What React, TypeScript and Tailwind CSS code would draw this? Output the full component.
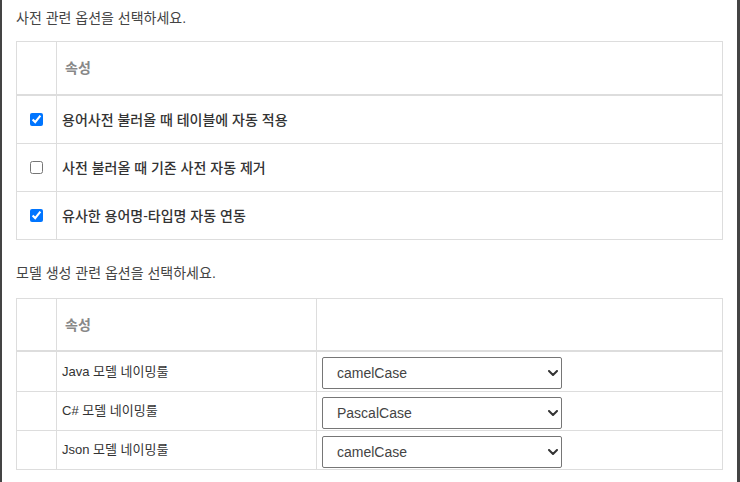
import { ChangeEvent, useState } from "react";

const FONT = "font-['Liberation_Sans','Noto_Sans_CJK_KR',sans-serif]";

type DictOption = { id: string; label: string; checked: boolean };
type NamingOption = { id: string; label: string; value: string };

const CASES = ["camelCase", "PascalCase", "snake_case", "kebab-case"];

function Chevron() {
  return (
    <svg
      className="pointer-events-none absolute right-[4px] top-1/2 -translate-y-1/2"
      width="10"
      height="6"
      viewBox="0 0 10 6"
      fill="none"
    >
      <path d="M1 1l4 4 4-4" stroke="#333" strokeWidth="2" strokeLinecap="round" strokeLinejoin="round" />
    </svg>
  );
}

function CaseSelect({ value, onChange }: { value: string; onChange: (v: string) => void }) {
  return (
    <div className="relative w-[240px]">
      <select
        value={value}
        onChange={(e: ChangeEvent<HTMLSelectElement>) => onChange(e.target.value)}
        className="block h-[32px] w-full appearance-none rounded-[2px] border border-[#767676] bg-white pl-[14px] text-[14px] text-[#444] outline-none"
      >
        {CASES.map((c) => (
          <option key={c} value={c}>
            {c}
          </option>
        ))}
      </select>
      <Chevron />
    </div>
  );
}

// row heights inside the bordered tables; last row sits on the outer border
const dictRowH = ["h-[48px] border-b border-[#ddd]", "h-[48px] border-b border-[#ddd]", "h-[47px]"];
const namingRowH = ["h-[40px] border-b border-[#ddd]", "h-[39px] border-b border-[#ddd]", "h-[38px]"];

export default function App() {
  const [dict, setDict] = useState<DictOption[]>([
    { id: "apply", label: "용어사전 불러올 때 테이블에 자동 적용", checked: true },
    { id: "remove", label: "사전 불러올 때 기존 사전 자동 제거", checked: false },
    { id: "link", label: "유사한 용어명-타입명 자동 연동", checked: true },
  ]);
  const [naming, setNaming] = useState<NamingOption[]>([
    { id: "java", label: "Java 모델 네이밍룰", value: "camelCase" },
    { id: "cs", label: "C# 모델 네이밍룰", value: "PascalCase" },
    { id: "json", label: "Json 모델 네이밍룰", value: "camelCase" },
  ]);

  function toggle(id: string) {
    setDict((d) => d.map((o) => (o.id === id ? { ...o, checked: !o.checked } : o)));
  }

  function setCase(id: string, value: string) {
    setNaming((n) => n.map((o) => (o.id === id ? { ...o, value } : o)));
  }

  return (
    <div
      className={`${FONT} h-[482px] w-[740px] overflow-hidden border-l-2 border-r-[3px] border-[#444] bg-white px-[14px] pt-[8px] text-[14px] leading-[20px]`}
    >
      <p className="h-[20px] text-[#444]">사전 관련 옵션을 선택하세요.</p>

      {/* 사전 옵션 */}
      <div className="mt-[13px] border border-[#ddd]">
        <div className="flex h-[54px] border-b-2 border-[#ddd]">
          <div className="w-[40px] border-r border-[#ddd]" />
          <div className="flex flex-1 items-center pl-[8px] font-bold text-[#888]">속성</div>
        </div>
        {dict.map((o, i) => (
          <div key={o.id} className={`flex ${dictRowH[i]}`}>
            <div className="flex w-[40px] items-center justify-center border-r border-[#ddd]">
              <input
                type="checkbox"
                checked={o.checked}
                onChange={() => toggle(o.id)}
                className="m-0 h-[13px] w-[13px]"
              />
            </div>
            <div className="flex flex-1 items-center pl-[5px] font-medium text-[#333]">{o.label}</div>
          </div>
        ))}
      </div>

      <p className="mt-[23px] h-[20px] text-[#444]">모델 생성 관련 옵션을 선택하세요.</p>

      {/* 모델 옵션 */}
      <div className="mt-[15px] border border-[#ddd]">
        <div className="flex h-[53px] border-b-2 border-[#ddd]">
          <div className="w-[40px] border-r border-[#ddd]" />
          <div className="flex w-[260px] items-center border-r border-[#ddd] pl-[8px] font-bold text-[#888]">
            속성
          </div>
          <div className="flex-1" />
        </div>
        {naming.map((o, i) => (
          <div key={o.id} className={`flex ${namingRowH[i]}`}>
            <div className="w-[40px] border-r border-[#ddd]" />
            <div className="flex w-[260px] items-center border-r border-[#ddd] pl-[5px] text-[13px] text-[#333]">
              {o.label}
            </div>
            <div className="flex-1 pl-[5px] pt-[5px]">
              <CaseSelect value={o.value} onChange={(v) => setCase(o.id, v)} />
            </div>
          </div>
        ))}
      </div>
    </div>
  );
}
